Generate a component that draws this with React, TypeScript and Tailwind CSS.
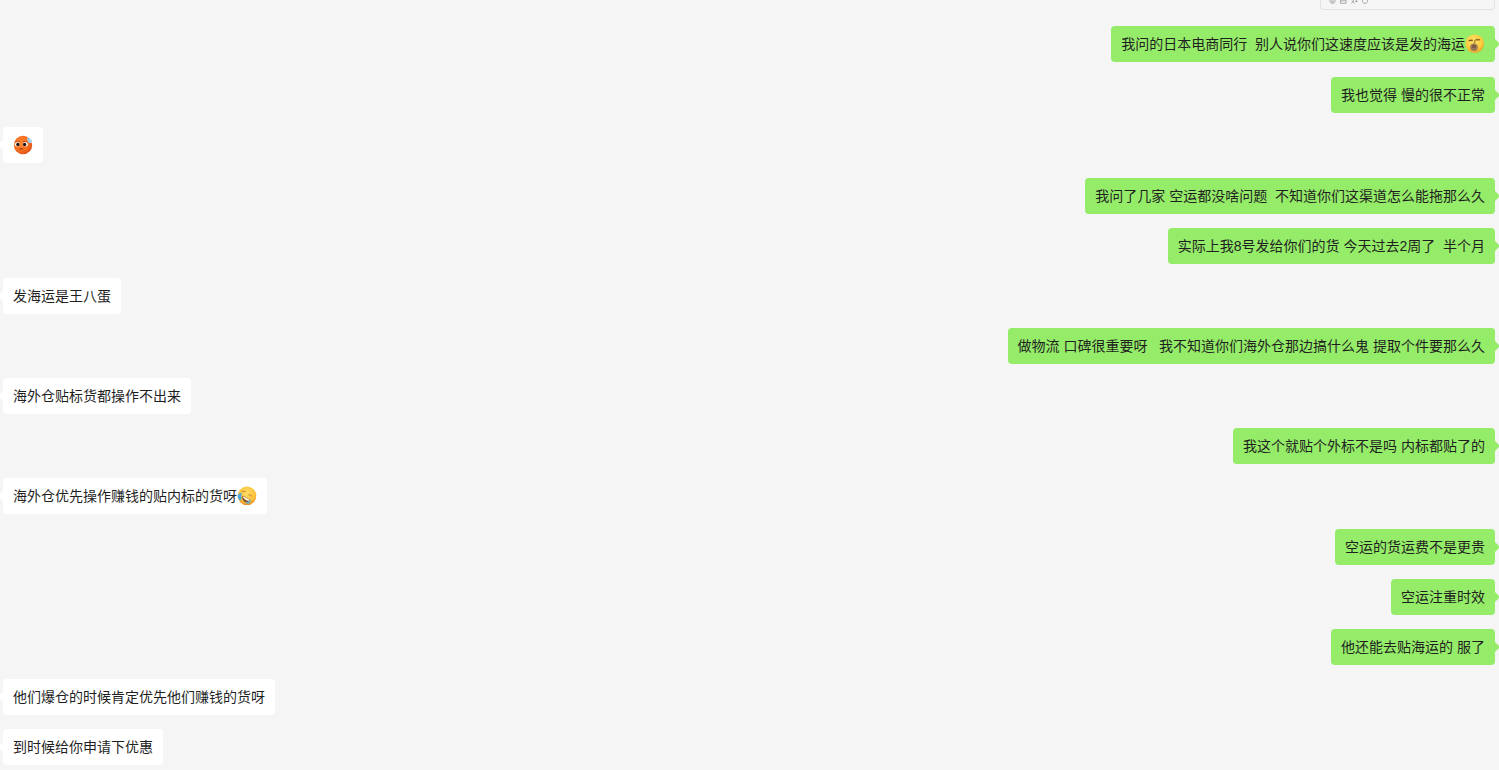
import type { ReactNode } from "react";
import clsx from "clsx";

function YawnFace() {
  return (
    <svg role="img" aria-label="打哈欠" viewBox="0 0 20 20" className="size-5 shrink-0">
      <defs>
        <radialGradient id="yawn" cx="0.45" cy="0.35" r="0.65">
          <stop offset="0" stopColor="#ffe36b" />
          <stop offset="0.7" stopColor="#fdcb3c" />
          <stop offset="1" stopColor="#eb9d2c" />
        </radialGradient>
      </defs>
      <circle cx="9.700" cy="9.700" r="9.3" fill="url(#yawn)" />
      <path d="M3.800 6.300 7.800 5.200M10.800 5.200l4.200.2" stroke="#c48a20" strokeWidth="0.8" fill="none" />
      <path d="M3.600 6.600h4.200M10.300 5.900h4.600" stroke="#6b4a1c" strokeWidth="1" fill="none" />
      <path d="M9.800 6v2.700l-1.300.6" stroke="#8a5f20" strokeWidth="0.9" fill="none" />
      <ellipse cx="9" cy="13.200" rx="3.900" ry="3.800" fill="#a38158" />
      <ellipse cx="8.900" cy="12.600" rx="2.300" ry="2" fill="#7d5d42" />
      <path d="M6.200 15c1.600 1.200 4.300 1.200 5.700 0" stroke="#8f7350" strokeWidth="0.8" fill="none" />
    </svg>
  );
}

function SweatFace() {
  return (
    <svg role="img" aria-label="苦涩" viewBox="0 0 20 20" className="size-5 shrink-0">
      <defs>
        <radialGradient id="sweat" cx="0.4" cy="0.4" r="0.65">
          <stop offset="0" stopColor="#ff8a30" />
          <stop offset="0.65" stopColor="#f56d1e" />
          <stop offset="1" stopColor="#dd4c16" />
        </radialGradient>
      </defs>
      <circle cx="10" cy="10" r="9.2" fill="url(#sweat)" />
      <path d="M14.300 2.200c2.500.4 4.500 2 5 4.800-.6 1-2 1.200-3.300.7-1.500-.8-2.200-3-1.700-5.500Z" fill="#a9d4f3" />
      <path d="M15.500 3.500c-.1 1.500.3 2.600 1.200 3.400" stroke="#78b6e4" strokeWidth="0.8" fill="none" />
      <ellipse cx="4.300" cy="9.300" rx="2.500" ry="2.200" fill="#fff" />
      <ellipse cx="12.300" cy="9.300" rx="2.600" ry="2.200" fill="#fff" />
      <circle cx="4.900" cy="9.500" r="1.700" fill="#26140e" />
      <circle cx="11.600" cy="9.500" r="1.700" fill="#26140e" />
      <path d="M1.900 7.400c1.400-.9 3-1 4.800-.6M9.800 6.800c1.800-.5 3.500-.3 5 .6" stroke="#c84a16" strokeWidth="1" fill="none" />
      <path d="M6.800 14.300c.8-.9 2.200-.9 3 0" stroke="#792c10" strokeWidth="1" fill="none" strokeLinecap="round" />
    </svg>
  );
}

function LaughCryFace() {
  return (
    <svg role="img" aria-label="破涕为笑" viewBox="0 0 20 20" className="size-5 shrink-0">
      <defs>
        <radialGradient id="laugh" cx="0.5" cy="0.35" r="0.65">
          <stop offset="0" stopColor="#ffdd66" />
          <stop offset="0.7" stopColor="#fbc03a" />
          <stop offset="1" stopColor="#e98d27" />
        </radialGradient>
      </defs>
      <circle cx="10" cy="9.800" r="9.3" fill="url(#laugh)" />
      <path d="M4.600 6c1.400-.9 2.700-1 4-.2M11.500 8.800c1.300 0 2.700.6 3.700 1.700" stroke="#b57422" strokeWidth="0.9" fill="none" />
      <path d="M5.200 9.800c2.600 1 5.200 2.200 8 4.200-1 2.300-3.900 2.900-6 1.400-1.600-1.200-2.300-3.200-2-5.600Z" fill="#84502a" />
      <path d="M5.400 10.200c2.700.9 5 2.100 7.300 3.800l-.7.9c-2.900-.4-5.400-1.900-6.600-4.700Z" fill="#fff4e2" />
      <path d="M4.800 6.800C2.300 7 .5 8.600.6 10.600c.2 1.800 1.300 3.300 2.600 3.900 1.300-.6 1.300-2.300 1.100-3.700-.1-1.500.2-2.900.5-4Z" fill="#4fa6dc" />
      <path d="M13.300 13.800c.5 1.600.1 3.200-1.300 3.700-1.500.4-3.300-.1-4-1 1.200.2 3.700-.5 5.300-2.700Z" fill="#5ba9d4" />
    </svg>
  );
}

type Message = { mine?: boolean; text?: string; emoji?: ReactNode };

const messages: Message[] = [
  { mine: true, text: "我问的日本电商同行  别人说你们这速度应该是发的海运", emoji: <YawnFace /> },
  { mine: true, text: "我也觉得 慢的很不正常" },
  { emoji: <SweatFace /> },
  { mine: true, text: "我问了几家 空运都没啥问题  不知道你们这渠道怎么能拖那么久" },
  { mine: true, text: "实际上我8号发给你们的货 今天过去2周了  半个月" },
  { text: "发海运是王八蛋" },
  { mine: true, text: "做物流 口碑很重要呀   我不知道你们海外仓那边搞什么鬼 提取个件要那么久" },
  { text: "海外仓贴标货都操作不出来" },
  { mine: true, text: "我这个就贴个外标不是吗 内标都贴了的" },
  { text: "海外仓优先操作赚钱的贴内标的货呀", emoji: <LaughCryFace /> },
  { mine: true, text: "空运的货运费不是更贵" },
  { mine: true, text: "空运注重时效" },
  { mine: true, text: "他还能去贴海运的 服了" },
  { text: "他们爆仓的时候肯定优先他们赚钱的货呀" },
  { text: "到时候给你申请下优惠" },
];

function Bubble({ mine, text, emoji }: Message) {
  return (
    <li className={clsx("flex", mine ? "justify-end" : "justify-start", emoji && "pb-px")}>
      <div
        className={clsx(
          "relative flex h-9 items-center rounded px-2.5",
          mine ? "bg-[#95ec69]" : "bg-white",
        )}
      >
        <svg
          aria-hidden="true"
          viewBox="0 0 4 10"
          className={clsx(
            "absolute top-[13px] h-2.5 w-1",
            mine ? "-right-1 fill-[#95ec69]" : "-left-1 -scale-x-100 fill-white",
          )}
        >
          <path d="M0 0v10l4-4V4Z" />
        </svg>
        {text && <span className="whitespace-pre">{text}</span>}
        {emoji}
      </div>
    </li>
  );
}

function CardFooter() {
  return (
    <div className="flex justify-end">
      <div className="h-2.5 w-[175px] rounded-b border border-t-0 border-[#e3e3e3] px-2">
        <svg
          aria-hidden="true"
          viewBox="0 0 42 5"
          className="h-[5px] w-[42px]"
          fill="none"
          stroke="#999"
          strokeWidth="0.8"
        >
          <path d="M.8 0c0 2 1 3.4 2.7 3.4S6.200 2 6.200 0M2 1h3M2.500 2.200h2" />
          <path d="M11.500 0v3.300H17V0M11.500 .8H17" />
          <path d="M22.500 3.500 25 0M23 .5l2.500 3M26 1.500h2.500M27.500 0v2" />
          <path d="M33.500 0c-.5 2 .8 3.400 2.500 3.400S39 2 38.500 0" />
        </svg>
      </div>
    </div>
  );
}

export default function App() {
  return (
    <main className="min-h-screen overflow-hidden bg-[#f5f5f5] pr-1 pb-[5px] pl-[3px] font-['Liberation_Sans','Noto_Sans_CJK_SC',sans-serif] text-sm text-[#1f1f1f]">
      <CardFooter />
      <ul className="mt-4 flex flex-col gap-3.5">
        {messages.map((message, index) => (
          <Bubble key={index} {...message} />
        ))}
      </ul>
    </main>
  );
}
